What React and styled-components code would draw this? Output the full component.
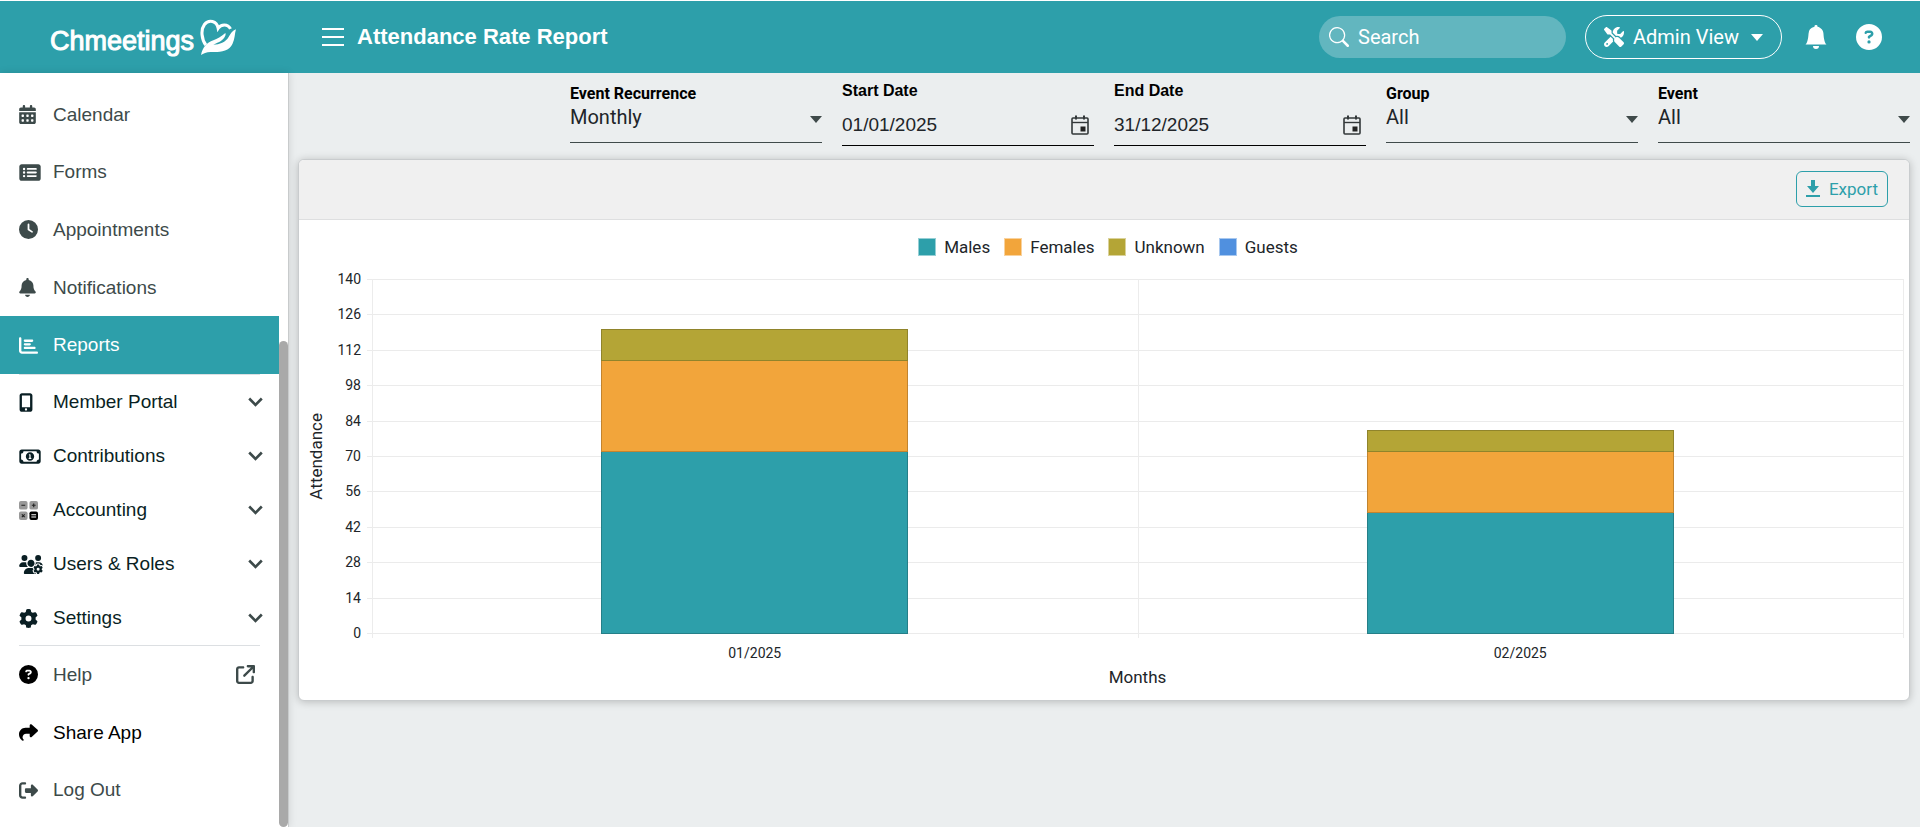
import React from "react";
import styled, { createGlobalStyle, css } from "styled-components";
import {
  FaCalendarDays, FaRectangleList, FaClock, FaBell, FaChartBar, FaMobileScreenButton,
  FaRegMoneyBill1, FaUsersGear, FaGear, FaCircleQuestion, FaShare, FaRightFromBracket,
  FaArrowUpRightFromSquare, FaScrewdriverWrench,
} from "react-icons/fa6";
import { BsSearch, BsBellFill } from "react-icons/bs";

const teal = "#2d9faa";
const dark = "#3d4a4a";
const ink = "#0a1f24";
const arial = `"Liberation Sans", Arial, sans-serif`;
const roboto = `Roboto, "Liberation Sans", sans-serif`;

const GlobalStyle = createGlobalStyle`
  *, *::before, *::after { box-sizing: border-box; }
  body { margin: 0; background: #ebeeef; font-family: ${roboto}; color: #212529; }
  button, input, select { font: inherit; color: inherit; }
  button { cursor: pointer; }
`;

const Page = styled.div`
  display: flex;
  flex-direction: column;
  min-height: 100vh;
`;

/* Header */
const Header = styled.header`
  display: flex;
  align-items: center;
  height: 73px;
  border-top: 1px solid #fff;
  background: ${teal};
  color: #fff;
  padding-right: 38px;
`;

const Brand = styled.a`
  display: flex;
  align-items: center;
  width: 322px;
  padding-left: 50px;
  gap: 6px;
  color: #fff;
  text-decoration: none;
  font: 27px/36px ${arial};
  -webkit-text-stroke: 1px #fff;

  span { padding-top: 8px; }
  svg { width: 37px; height: 37px; }
`;

const MenuButton = styled.button`
  display: flex;
  padding: 0;
  border: 0;
  background: none;
  margin-right: 13px;
`;

const Title = styled.h1`
  flex: 1;
  margin: 0;
  font: bold 22px/28px ${arial};
`;

const SearchBox = styled.label`
  display: flex;
  align-items: center;
  gap: 9px;
  width: 247px;
  height: 42px;
  margin-right: 19px;
  padding: 0 10px;
  border-radius: 21px;
  background: #62b6bf;

  svg { flex: none; width: 20px; height: 20px; }
  input {
    min-width: 0;
    flex: 1;
    border: 0;
    padding: 0;
    outline: 0;
    background: none;
    font: 20px/24px ${roboto};
    color: #fff;
  }
  input::placeholder { color: #fff; opacity: 1; }
`;

const ViewButton = styled.button`
  display: flex;
  align-items: center;
  gap: 9px;
  width: 197px;
  height: 44px;
  margin-right: 22px;
  padding: 0 18px;
  border: 1px solid #fff;
  border-radius: 22px;
  background: none;
  font: 20px/24px ${roboto};
  color: #fff;

  span { flex: 1; text-align: left; white-space: nowrap; }
  svg { flex: none; }
`;

const IconButton = styled.button`
  display: flex;
  padding: 0;
  border: 0;
  background: none;
  color: #fff;
  & + & { margin-left: 28px; }
`;

/* Side navigation */
const Body = styled.div`
  display: flex;
  flex: 1;
`;

const Sidebar = styled.aside`
  display: flex;
  width: 288px;
  flex: none;
  background: #fff;
  box-shadow: 1px 0 0 #c8cbcc, 1px 0 8px rgba(0, 0, 0, 0.12);
`;

const Nav = styled.nav`
  flex: 1;
  padding-top: 13px;
`;

const NavGroup = styled.div`
  display: flex;
  flex-direction: column;
  height: ${(p) => p.$height}px;
`;

const Divider = styled.hr`
  height: 1px;
  margin: 0 19px;
  border: 0;
  background: #dcdfe2;
`;

const NavItem = styled.a`
  display: grid;
  grid-template-columns: 34px 1fr auto;
  align-items: center;
  flex: 1;
  padding: 0 16px 0 19px;
  color: ${(p) => p.$color};
  text-decoration: none;
  font: 19px/24px ${arial};
  ${(p) => p.$active && css`background: ${teal};`}
`;

const NavIcon = styled.span`
  display: flex;
  color: ${(p) => p.$color};

  svg {
    width: ${(p) => p.$width || 19}px;
    height: 19px;
  }
`;

const ExternalMark = styled(NavIcon)`
  padding-right: 8px;
`;

const ScrollTrack = styled.div`
  width: 9px;
  padding-top: 268px;
`;

const ScrollThumb = styled.div`
  height: 100%;
  border-radius: 5px;
  background: #a9a9a9;
`;

/* Main */
const Main = styled.main`
  flex: 1;
  min-width: 0;
  padding: 0 10px;
`;

const Filters = styled.form`
  display: grid;
  grid-template-columns: repeat(6, minmax(0, 1fr));
  gap: 20px;
  height: 86px;
  padding-top: 8px;

  > :first-child { grid-column-start: 2; }
`;

const Field = styled.div`
  label {
    display: block;
    color: #000;
    font: bold 16px/20px ${(p) => (p.$date ? arial : roboto)};
    padding-top: ${(p) => (p.$date ? 0 : 3)}px;
  }
`;

const Control = styled.div`
  display: flex;
  align-items: center;
  height: ${(p) => (p.$date ? 45 : 39)}px;
  border-bottom: 1px solid ${(p) => (p.$date ? "#000" : "#3f4a4a")};
  padding-top: ${(p) => (p.$date ? 3 : 0)}px;
  padding-right: ${(p) => (p.$date ? 5 : 0)}px;

  select, input {
    flex: 1;
    min-width: 0;
    height: 24px;
    padding: 0;
    border: 0;
    outline: 0;
    appearance: none;
    background: none;
    color: #212529;
    font: ${(p) => (p.$date ? "19px" : "20px")}/24px ${(p) => (p.$date ? arial : roboto)};
  }
  select { margin-bottom: 12px; }
  svg { flex: none; }
`;

const Caret = styled.svg`
  width: 12px;
  height: 7px;
  margin-bottom: 8px;
  fill: #3f4a4a;
`;

const Card = styled.section`
  border: 1px solid #c9ccce;
  border-radius: 6px;
  background: #fff;
  box-shadow: 0 1px 8px rgba(0, 0, 0, 0.22);
  overflow: hidden;
`;

const CardHeader = styled.div`
  display: flex;
  justify-content: flex-end;
  align-items: center;
  height: 60px;
  padding: 0 21px 2px;
  background: #f0f0f0;
  border-bottom: 1px solid #dedfe0;
`;

const ExportButton = styled.button`
  display: flex;
  align-items: center;
  gap: 9px;
  height: 36px;
  padding: 0 9px;
  border: 1px solid ${teal};
  border-radius: 6px;
  background: none;
  color: ${teal};
  font: 17px/24px ${roboto};
`;

const Legend = styled.ul`
  display: flex;
  justify-content: center;
  gap: 14px;
  margin: 0;
  padding: 15px 0 20px 8px;
  list-style: none;
`;

const LegendItem = styled.li`
  display: flex;
  align-items: center;
  gap: 8px;
  font-size: 17px;
  line-height: 24px;

  &::before {
    content: "";
    width: 18px;
    height: 18px;
    background: ${(p) => p.$color};
    border: 1px solid rgba(255, 255, 255, 0.5);
  }
`;

const ChartGrid = styled.div`
  display: grid;
  grid-template-columns: 34px 28px 1fr;
  padding-right: 6px;
  padding-bottom: 11px;
`;

const YTitle = styled.div`
  justify-self: center;
  align-self: center;
  writing-mode: vertical-rl;
  transform: rotate(180deg);
  font-size: 17px;
  line-height: 20px;
`;

const YTicks = styled.div`
  display: flex;
  flex-direction: column;
  justify-content: space-between;
  margin: -8px 0;
  text-align: right;
  font-size: 14px;
  line-height: 16px;
`;

const Plot = styled.svg`
  display: block;
  width: calc(100% - 11px);
  height: 354px;
  margin-left: 11px;
  overflow: visible;
  shape-rendering: crispEdges;
`;

const XAxis = styled.div`
  grid-column: 3;
  display: grid;
  grid-template-columns: 1fr 1fr;
  row-gap: 4px;
  margin-left: 11px;
  padding-top: 12px;
  text-align: center;
  font-size: 14px;
  line-height: 16px;
`;

const XTitle = styled.div`
  grid-column: 1 / -1;
  font-size: 17px;
  line-height: 24px;
`;

const series = [
  { name: "Males", color: "#2d9faa", edge: "#257f88" },
  { name: "Females", color: "#f2a53b", edge: "#c2842f" },
  { name: "Unknown", color: "#b4a536", edge: "#90842b" },
  { name: "Guests", color: "#5090df", edge: "#4073b2" },
];
const months = [
  { label: "01/2025", values: [72, 36, 12, 0] },
  { label: "02/2025", values: [48, 24, 8, 0] },
];
const ticks = [140, 126, 112, 98, 84, 70, 56, 42, 28, 14, 0];
const plotHeight = 354;
const toY = (v) => Math.round(plotHeight - (v * plotHeight) / 140);

function Chart() {
  return (
    <ChartGrid>
      <YTitle>Attendance</YTitle>
      <YTicks>{ticks.map((t) => <span key={t}>{t}</span>)}</YTicks>
      <Plot role="img" aria-label="Attendance by month">
        {ticks.map((t) => (
          <g key={t} fill="#ebebeb">
            <rect x="-5" y={toY(t)} width="5" height="1" />
            <rect x="0" y={toY(t)} width="100%" height="1" />
          </g>
        ))}
        {["0%", "50%", "100%"].map((x) => (
          <rect key={x} x={x} y="0" width="1" height={plotHeight + 5} fill="#ececec" />
        ))}
        {months.map((m, i) => {
          let sum = 0;
          return m.values.map((v, s) => {
            if (!v) return null;
            const bottom = toY(sum);
            sum += v;
            const top = toY(sum);
            return (
              <rect key={m.label + s} x={`${i * 50 + 15}%`} y={top - 1} width="20%"
                height={bottom - top + 1} fill={series[s].color} stroke={series[s].edge} />
            );
          });
        })}
      </Plot>
      <XAxis>
        {months.map((m) => <span key={m.label}>{m.label}</span>)}
        <XTitle>Months</XTitle>
      </XAxis>
    </ChartGrid>
  );
}

const LogoMark = () => (
  <svg viewBox="0 0 106 108" aria-hidden="true">
    <path d="M16 76C4 60 0 32 12 16C25 0 48 6 52 27C60 15 80 13 88 29" fill="none" stroke="#fff" strokeWidth="9" />
    <path d="M2 105C6 84 18 68 38 62C50 58 60 52 73 41C76 47 70 57 60 64C54 68 46 70 38 75C56 75 74 68 83 52C88 43 94 33 104 30C100 44 101 58 94 72C84 96 50 98 30 96C18 96 8 100 2 105Z" fill="#fff" />
  </svg>
);

const AccountingIcon = () => (
  <svg viewBox="0 0 20 20" aria-hidden="true">
    <rect width="9" height="9" rx="2" fill="#999" />
    <rect x="11" width="9" height="9" rx="2" fill="#999" />
    <rect y="11" width="9" height="9" rx="2" fill="#999" />
    <rect x="11" y="11" width="9" height="9" rx="2" fill="#000" />
    <path d="M2.500 4.500h4M13.500 4.500h4M15.500 2.500v4M3 14l3 3M6 14l-3 3" stroke="#222" strokeWidth="1.200" />
    <path d="M13 14.500h5M13 16.800h5" stroke="#fff" strokeWidth="1.200" />
  </svg>
);

const DownloadIcon = () => (
  <svg width="14" height="18" viewBox="0 0 14 18" fill="currentColor" aria-hidden="true">
    <path d="M5 0h4v6h4l-6 7-6-7h4zM0 15h14v2H0z" />
  </svg>
);

const ChevronIcon = () => (
  <svg width="15" height="10" viewBox="0 0 15 10" fill="none" stroke={dark} strokeWidth="2.600" aria-hidden="true">
    <path d="M1.200 1.500l6.300 6.300 6.300-6.300" />
  </svg>
);

const DateIcon = () => (
  <svg width="18" height="20" viewBox="0 0 18 20" fill="none" stroke="#33383a" aria-hidden="true">
    <rect x="1" y="3" width="16" height="16" rx="1" strokeWidth="1.600" />
    <path d="M1 7.500h16" strokeWidth="1.400" />
    <path d="M5 0.500v4M13 0.500v4" strokeWidth="2" />
    <rect x="9.500" y="11.500" width="5" height="5" fill="#222" stroke="none" />
  </svg>
);

const SelectCaret = () => (
  <Caret viewBox="0 0 12 7" aria-hidden="true"><path d="M0 0h12L6 7z" /></Caret>
);

const primary = [
  ["Calendar", <FaCalendarDays />, 17],
  ["Forms", <FaRectangleList />, 22],
  ["Appointments", <FaClock />, 19],
  ["Notifications", <FaBell />, 17],
  ["Reports", <FaChartBar />, 19],
];
const sections = [
  ["Member Portal", <FaMobileScreenButton />, 14],
  ["Contributions", <FaRegMoneyBill1 />, 22],
  ["Accounting", <AccountingIcon />, 19],
  ["Users & Roles", <FaUsersGear />, 24],
  ["Settings", <FaGear />, 19],
];

function SelectField({ id, label, value }) {
  return (
    <Field>
      <label htmlFor={id}>{label}</label>
      <Control>
        <select id={id}><option>{value}</option></select>
        <SelectCaret />
      </Control>
    </Field>
  );
}

function DateField({ id, label, value }) {
  return (
    <Field $date>
      <label htmlFor={id}>{label}</label>
      <Control $date>
        <input id={id} defaultValue={value} />
        <DateIcon />
      </Control>
    </Field>
  );
}

export default function App() {
  return (
    <Page>
      <GlobalStyle />
      <Header>
        <Brand href="#"><span>Chmeetings</span><LogoMark /></Brand>
        <MenuButton aria-label="Toggle menu">
          <svg width="22" height="20" viewBox="0 0 22 20" fill="#fff">
            <path d="M0 1h22v2H0zM0 9h22v2H0zM0 17h22v2H0z" />
          </svg>
        </MenuButton>
        <Title>Attendance Rate Report</Title>
        <SearchBox>
          <BsSearch aria-hidden="true" />
          <input type="search" placeholder="Search" aria-label="Search" />
        </SearchBox>
        <ViewButton>
          <FaScrewdriverWrench size={20} />
          <span>Admin View</span>
          <svg width="12" height="7" viewBox="0 0 12 7" fill="#fff"><path d="M0 0h12L6 7z" /></svg>
        </ViewButton>
        <IconButton aria-label="Notifications"><BsBellFill size={24} /></IconButton>
        <IconButton aria-label="Help"><FaCircleQuestion size={26} /></IconButton>
      </Header>
      <Body>
        <Sidebar>
          <Nav aria-label="Main">
            <NavGroup $height={288}>
              {primary.map(([label, icon, width]) => {
                const active = label === "Reports";
                return (
                  <NavItem key={label} href="#" $active={active} $color={active ? "#fff" : dark}
                    aria-current={active ? "page" : undefined}>
                    <NavIcon $width={width}>{icon}</NavIcon>{label}
                  </NavItem>
                );
              })}
            </NavGroup>
            <Divider />
            <NavGroup $height={270}>
              {sections.map(([label, icon, width]) => (
                <NavItem key={label} href="#" $color={ink}>
                  <NavIcon $width={width}>{icon}</NavIcon>{label}<ChevronIcon />
                </NavItem>
              ))}
            </NavGroup>
            <Divider />
            <NavGroup $height={173}>
              <NavItem href="#" $color={dark}>
                <NavIcon $color="#000"><FaCircleQuestion /></NavIcon>Help
                <ExternalMark><FaArrowUpRightFromSquare /></ExternalMark>
              </NavItem>
              <NavItem href="#" $color="#000"><NavIcon><FaShare /></NavIcon>Share App</NavItem>
              <NavItem href="#" $color={dark}><NavIcon><FaRightFromBracket /></NavIcon>Log Out</NavItem>
            </NavGroup>
          </Nav>
          <ScrollTrack><ScrollThumb /></ScrollTrack>
        </Sidebar>
        <Main>
          <Filters>
            <SelectField id="recurrence" label="Event Recurrence" value="Monthly" />
            <DateField id="start" label="Start Date" value="01/01/2025" />
            <DateField id="end" label="End Date" value="31/12/2025" />
            <SelectField id="group" label="Group" value="All" />
            <SelectField id="event" label="Event" value="All" />
          </Filters>
          <Card>
            <CardHeader>
              <ExportButton><DownloadIcon />Export</ExportButton>
            </CardHeader>
            <Legend>
              {series.map((s) => <LegendItem key={s.name} $color={s.color}>{s.name}</LegendItem>)}
            </Legend>
            <Chart />
          </Card>
        </Main>
      </Body>
    </Page>
  );
}
